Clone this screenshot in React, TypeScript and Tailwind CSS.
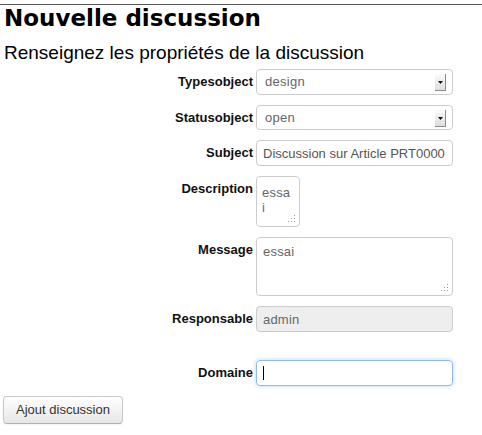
const Grip = () => (
  <svg
    className="absolute right-[4px] bottom-[4px] pointer-events-none"
    width="9"
    height="8"
    viewBox="0 0 9 8"
  >
    <rect x="7" y="0" width="1" height="1" fill="#9a9a9a" />
    <rect x="7" y="3" width="1" height="1" fill="#9a9a9a" />
    <rect x="7" y="6" width="1" height="1" fill="#9a9a9a" />
    <rect x="4" y="3" width="1" height="1" fill="#9a9a9a" />
    <rect x="4" y="6" width="1" height="1" fill="#9a9a9a" />
    <rect x="1" y="6" width="1" height="1" fill="#9a9a9a" />
  </svg>
);

const SelectArrow = () => (
  <span className="absolute right-[7px] top-[5px] w-[11px] h-[17px] flex items-center justify-center bg-gradient-to-b from-[#fbfbfb] to-[#dedede] border-r border-b border-[#8c8c8c] pointer-events-none">
    <svg width="5" height="3" viewBox="0 0 5 3">
      <path d="M0 0h5L2.5 3z" fill="#111" />
    </svg>
  </span>
);

const Label = ({ children }: { children: React.ReactNode }) => (
  <label className="w-[253px] shrink-0 text-right text-[13px] leading-[15px] pt-[5px] font-bold text-[#111]">
    {children}
  </label>
);

const Select = ({ value, h }: { value: string; h: string }) => (
  <div className={`relative w-[197px] ${h}`}>
    <select
      defaultValue={value}
      className="appearance-none w-full h-full bg-white border border-[#cccccc] rounded-[4px] pl-[8px] text-[13px] tracking-[0.3px] text-[#666] outline-none"
    >
      <option value={value}>{value}</option>
    </select>
    <SelectArrow />
  </div>
);

export default function App() {
  return (
    <div className="min-h-[435px] bg-white font-['Liberation_Sans',Arial,sans-serif] text-[#333]">
      <hr className="mt-[4px] border-0 border-t border-[#5a5a5a]" />
      <h1 className="pl-[4px] font-['DejaVu_Sans',sans-serif] font-bold text-[23px] leading-[27px] text-black">
        Nouvelle discussion
      </h1>
      <h2 className="mt-[10px] pl-[4px] text-[19px] leading-[22px] text-black">
        Renseignez les propriétés de la discussion
      </h2>

      <form className="mt-[5px] flex flex-col gap-[10px]">
        <div className="flex gap-[3px]">
          <Label>Typesobject</Label>
          <Select value="design" h="h-[26px]" />
        </div>
        <div className="flex gap-[3px]">
          <Label>Statusobject</Label>
          <Select value="open" h="h-[25px]" />
        </div>
        <div className="flex gap-[3px]">
          <Label>Subject</Label>
          <input
            readOnly
            value="Discussion sur Article PRT0000"
            className="w-[197px] h-[26px] border border-[#cccccc] rounded-[4px] px-[6px] text-[13px] text-[#555] outline-none"
          />
        </div>
        <div className="flex gap-[3px]">
          <Label>Description</Label>
          <div className="relative">
            <textarea
              readOnly
              value="essai"
              className="block resize-none w-[44px] h-[51px] border border-[#cccccc] rounded-[4px] pl-[5px] pr-[7px] pt-[8px] text-[13px] leading-[15px] tracking-[0.2px] text-[#666] outline-none overflow-hidden"
            />
            <Grip />
          </div>
        </div>
        <div className="flex gap-[3px]">
          <Label>Message</Label>
          <div className="relative">
            <textarea
              readOnly
              value="essai"
              className="block resize-none w-[197px] h-[59px] border border-[#cccccc] rounded-[4px] px-[6px] pt-[6px] text-[13px] leading-[15px] tracking-[0.2px] text-[#666] outline-none overflow-hidden"
            />
            <Grip />
          </div>
        </div>
        <div className="flex gap-[3px]">
          <Label>Responsable</Label>
          <input
            readOnly
            value="admin"
            className="w-[197px] h-[26px] bg-[#eeeeee] border border-[#cccccc] rounded-[4px] px-[6px] text-[13px] tracking-[0.2px] text-[#666] outline-none"
          />
        </div>
        <div className="h-[8px]" />
        <div className="flex gap-[3px]">
          <Label>Domaine</Label>
          <div className="relative">
            <input
              readOnly
              value=""
              className="block w-[197px] h-[26px] border border-[#8fbbe8] rounded-[4px] px-[6px] text-[13px] text-[#555] outline-none shadow-[0_0_4px_rgba(82,168,236,0.45)]"
            />
            <span className="absolute left-[7px] top-[6px] w-px h-[14px] bg-black" />
          </div>
        </div>
        <div className="pl-[3px]">
          <button
            type="button"
            className="w-[120px] h-[28px] bg-gradient-to-b from-white to-[#e6e6e6] border border-[#c8c8c8] border-b-[#b0b0b0] rounded-[4px] text-[13px] text-[#333] shadow-[0_1px_2px_rgba(0,0,0,0.05)]"
          >
            Ajout discussion
          </button>
        </div>
      </form>
    </div>
  );
}
